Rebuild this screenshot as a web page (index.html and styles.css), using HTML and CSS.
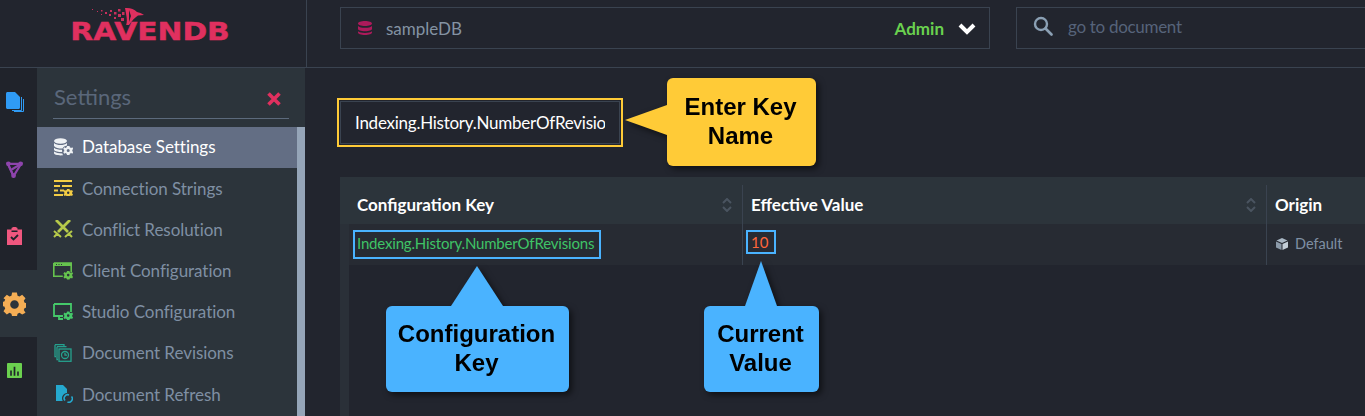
FILE: index.html
```html
<!DOCTYPE html>
<html lang="en">
<head>
<meta charset="utf-8">
<title>RavenDB Settings</title>
<link rel="stylesheet" href="styles.css">
</head>
<body>
<div class="app">
  <header class="topbar">
    <div class="brand">
      <svg class="bird" viewBox="0 0 60 18" width="60" height="18">
        <path fill="#e0305f" d="M34 1c5-.5 9 1 12 4 2 .3 5 1.500 7 3l-6 .5c-3 2-6 5-9 9.500l-3 .5c1-3 1-6 .5-9 -.5-3-1-6-1.500-8.500z"/>
        <path fill="#22252e" d="M38 3l2 6-2 6z"/>
        <g fill="#c92f5c">
          <rect x="1" y="2" width="1" height="1"/><rect x="6" y="4" width="1" height="1"/><rect x="10" y="3" width="1.500" height="1.500"/><rect x="14" y="5" width="2" height="2"/><rect x="19" y="3" width="2" height="2"/><rect x="18" y="7" width="2" height="2"/><rect x="23" y="5" width="2.500" height="2.500"/><rect x="27" y="2" width="2.500" height="2.500"/><rect x="27" y="7" width="3" height="3"/><rect x="31" y="5" width="2.500" height="3"/><rect x="23" y="10" width="2" height="2"/><rect x="30" y="11" width="3" height="3"/><rect x="10" y="7" width="1" height="1"/>
        </g>
      </svg>
      <span class="wordmark">RAVENDB</span>
    </div>
    <div class="top-fields">
      <div class="db-select">
        <svg class="db-icon" viewBox="0 0 14 14" width="14" height="14"><path fill="#ad1a5b" d="M0 2.500C0 1 3 0 7 0s7 1 7 2.500S11 5 7 5 0 4 0 2.500zM0 5c1 1.300 4 1.800 7 1.800S13 6.300 14 5v3c0 1.200-3 2.200-7 2.200S0 9.200 0 8zM0 10.200c1 1.200 4 1.700 7 1.700s6-.5 7-1.700v1.300c0 1.500-3 2.500-7 2.500s-7-1-7-2.500z"/></svg>
        <span class="db-name">sampleDB</span>
        <span class="db-role">Admin</span>
        <svg class="chev" viewBox="0 0 18 13" width="18" height="13"><path fill="none" stroke="#fff" stroke-width="4" d="M2 3l7 7 7-7"/></svg>
      </div>
      <div class="doc-search">
        <svg viewBox="0 0 20 20" width="20" height="20"><circle cx="8" cy="8" r="6" fill="none" stroke="#8ba0b4" stroke-width="2.400"/><path stroke="#8ba0b4" stroke-width="2.600" stroke-linecap="round" d="M12.500 12.500l6 6"/></svg>
        <span>go to document</span>
      </div>
    </div>
  </header>
  <div class="body">
    <nav class="rail">
      <div class="rail-item">
        <svg viewBox="0 0 18 20" width="18" height="20"><path fill="none" stroke="#2f9bf5" d="M15.500 5v13.500H6M17.500 7v12.500H8"/><path fill="#2f9bf5" d="M0 1.500C0 .7.700 0 1.500 0H9l5 5v10.500c0 .8-.7 1.500-1.500 1.500h-11C.7 17 0 16.300 0 15.500z"/></svg>
      </div>
      <div class="rail-item">
        <svg viewBox="0 0 18 18" width="17" height="17"><g fill="none" stroke="#8e44ad" stroke-width="2.300"><path d="M2 3h14L8 16z"/><path d="M2 3l6 13"/><path d="M16 3L6 9"/></g><g fill="#8e44ad"><circle cx="2.500" cy="3" r="2.500"/><circle cx="15.500" cy="3" r="2.500"/><circle cx="8" cy="15.500" r="2.500"/></g></svg>
      </div>
      <div class="rail-item">
        <svg viewBox="0 0 15 18" width="15" height="18"><path fill="#f0577f" d="M0 2.500h4.500V1.500C4.500.5 6 0 7.500 0s3 .5 3 1.500v1H15V18H0z"/><path fill="#20232b" d="M4.500 3.500h6V5h-6z"/><path fill="none" stroke="#20232b" stroke-width="1.800" d="M4 10l2.500 2.500L11 8"/></svg>
      </div>
      <div class="rail-item rail-active">
        <svg viewBox="0 0 24 24" width="23" height="24"><path fill="#f5ae55" fill-rule="evenodd" d="M9.500 0h5l.7 3.300 2 .9L20 2.400l3.500 3.500-1.800 2.800.9 2 3.300.7v4l-3.300.8-.9 2 1.800 2.800L20 23l-2.800-1.800-2 .9-.7 2.900h-5l-.7-2.900-2-.9L4 23 .5 19.500l1.800-2.800-.9-2-3-.7v-4l3-.7.9-2L.5 5.900 4 2.400l2.800 1.800 2-.9zM12 8a4.500 4.500 0 1 0 0 9 4.500 4.500 0 0 0 0-9z"/></svg>
      </div>
      <div class="rail-item">
        <svg viewBox="0 0 14 14" width="15" height="15"><path fill="#6bd04f" d="M1 0h12c.6 0 1 .4 1 1v12c0 .6-.4 1-1 1H1c-.6 0-1-.4-1-1V1c0-.6.4-1 1-1z"/><path fill="#20232b" d="M3 7h1.500v5H3zM6.200 3.500h1.600V12H6.200zM9.500 8H11v4H9.500z"/></svg>
      </div>
    </nav>
    <aside class="sidebar">
      <div class="side-head">
        <span class="side-title">Settings</span>
        <svg class="side-close" viewBox="0 0 14 14" width="14" height="14"><path stroke="#e0305f" stroke-width="3.600" d="M1.500 1.500l11 11M12.500 1.500l-11 11"/></svg>
      </div>
      <div class="side-scroll">
        <ul class="side-list">
          <li class="side-item is-active">
            <svg class="side-icon" viewBox="0 0 20 18" width="20" height="18"><g fill="#eef1f4"><ellipse cx="7.500" cy="3" rx="6.500" ry="2.800"/><path d="M1 5c1.500 1.500 4 2 6.500 2S12.500 6.500 14 5v2.500c-2 .3-4 1.500-4.500 3-2.500.2-7-.4-8.500-2.500zM1 9.800c1.500 1.500 5 2 8 2l.2 2.200C5 14 2 13.500 1 12zM1 13.500c1.500 1.300 5 2 8.300 2l.7 1.800c-5 .4-9-.6-9-2.300z"/><path fill-rule="evenodd" d="M14 8h2.500l.3 1.300 1.300.6 1.200-.7 1 1.700-1 .9v1.400l1 .9-1 1.700-1.200-.7-1.300.6-.3 1.300H14l-.3-1.300-1.300-.6-1.200.7-1-1.700 1-.9v-1.400l-1-.9 1-1.700 1.200.7 1.300-.6zm1.200 3a1.500 1.500 0 1 0 0 3 1.500 1.500 0 0 0 0-3z"/></g></svg>
            <span>Database Settings</span>
          </li>
          <li class="side-item">
            <svg class="side-icon" viewBox="0 0 20 16" width="20" height="16"><g fill="#f3cd45"><path d="M1 0h18v2H1zM1 5h6v2H1zM9 5h10v2H9zM1 9.500h4v2H1zM7 9.500h4v2H7zM1 14h9v2H1z"/><path fill-rule="evenodd" d="M14 9h2.500l.3 1 1.200.5 1-.5 1 1.500-.8.8v1.400l.8.800-1 1.500-1-.5-1.200.5-.3 1H14l-.3-1-1.200-.5-1 .5-1-1.500.8-.8v-1.400l-.8-.8 1-1.500 1 .5 1.200-.5zm1.200 2.500a1.200 1.200 0 1 0 0 2.400 1.200 1.200 0 0 0 0-2.400z"/></g></svg>
            <span>Connection Strings</span>
          </li>
          <li class="side-item">
            <svg class="side-icon" viewBox="0 0 20 18" width="20" height="18"><g fill="none" stroke="#b5c94a" stroke-width="2.800"><path d="M3 0l12 12M17 0L5 12"/></g><g fill="none" stroke="#b5c94a" stroke-width="2"><path d="M1 17l4-4M19 17l-4-4M1 11l7 6M19 11l-7 6"/></g></svg>
            <span>Conflict Resolution</span>
          </li>
          <li class="side-item">
            <svg class="side-icon" viewBox="0 0 20 18" width="20" height="18"><path fill="none" stroke="#66c34e" stroke-width="1.600" d="M.8 1h17.400v9M.8 1v13.200h9"/><path fill="#66c34e" d="M1 1h17v3H1z"/><path fill="#2c343b" d="M3 2h1v1H3zM5.500 2h1v1h-1zM8 2h1v1H8z"/><path fill="#66c34e" fill-rule="evenodd" d="M14 9h2.500l.3 1.200 1.200.5 1.100-.6 1 1.600-.9.900v1.400l.9.900-1 1.600-1.100-.6-1.200.5-.3 1.200H14l-.3-1.200-1.200-.5-1.100.6-1-1.600.9-.9v-1.400l-.9-.9 1-1.600 1.100.6 1.200-.5zm1.200 2.800a1.300 1.300 0 1 0 0 2.600 1.300 1.300 0 0 0 0-2.600z"/></svg>
            <span>Client Configuration</span>
          </li>
          <li class="side-item">
            <svg class="side-icon" viewBox="0 0 20 18" width="20" height="18"><path fill="none" stroke="#45c96a" stroke-width="1.800" d="M1 1h17v8M1 1v12h9M6 13v3h4"/><path fill="#45c96a" fill-rule="evenodd" d="M14 8.500h2.500l.3 1.200 1.200.5 1.100-.6 1 1.600-.9.900v1.400l.9.900-1 1.600-1.100-.6-1.200.5-.3 1.200H14l-.3-1.200-1.200-.5-1.100.6-1-1.600.9-.9v-1.400l-.9-.9 1-1.600 1.100.6 1.200-.5zm1.200 2.800a1.300 1.300 0 1 0 0 2.600 1.300 1.300 0 0 0 0-2.600z"/></svg>
            <span>Studio Configuration</span>
          </li>
          <li class="side-item">
            <svg class="side-icon" viewBox="0 0 20 18" width="20" height="18"><g fill="none" stroke="#25a18e" stroke-width="1.300"><path d="M2 0.700h9v2M2 .7v12h1"/><path d="M4 2.700h9.500M4 2.700v13h1"/><rect x="6" y="5" width="12" height="12.300"/><circle cx="12" cy="11" r="3.500"/><path d="M12 9v2.200h2"/></g></svg>
            <span>Document Revisions</span>
          </li>
          <li class="side-item">
            <svg class="side-icon" viewBox="0 0 20 18" width="20" height="18"><path fill="#25a9cf" d="M3 0h7l4 4v4c-3 .3-5 2.500-5 5 0 1 .2 2 .7 3H3z"/><path fill="none" stroke="#25a9cf" stroke-width="1.600" d="M12 15.500a3.500 3.500 0 0 1 4-5.500M18.500 11.500a3.500 3.500 0 0 1-4 5.500"/></svg>
            <span>Document Refresh</span>
          </li>
        </ul>
        <div class="side-bar"></div>
      </div>
    </aside>
    <main class="main">
      <div class="filter-wrap">
        <input class="filter" type="text" value="Indexing.History.NumberOfRevisions" readonly>
      </div>
      <section class="table">
        <div class="row thead">
          <div class="cell">
            <span>Configuration Key</span>
            <svg class="sort" viewBox="0 0 10 14" width="10" height="14"><path fill="none" stroke="#4a5460" stroke-width="2" d="M1 5l4-4 4 4M1 9l4 4 4-4"/></svg>
          </div>
          <div class="cell">
            <span>Effective Value</span>
            <svg class="sort" viewBox="0 0 10 14" width="10" height="14"><path fill="none" stroke="#4a5460" stroke-width="2" d="M1 5l4-4 4 4M1 9l4 4 4-4"/></svg>
          </div>
          <div class="cell"><span>Origin</span></div>
        </div>
        <div class="tbody">
          <div class="row trow">
            <div class="cell"><span class="key mark">Indexing.History.NumberOfRevisions</span></div>
            <div class="cell"><span class="val mark">10</span></div>
            <div class="cell origin">
              <svg viewBox="0 0 12 12" width="12" height="12"><path fill="#a9b7c4" d="M6 0l5.500 2.500L6 5 .5 2.500z"/><path fill="#8b9aa9" d="M0 3.500l5.500 2.500v6L0 9.500z"/><path fill="#c3ced8" d="M12 3.500L6.500 6v6L12 9.500z"/></svg>
              <span>Default</span>
            </div>
          </div>
        </div>
      </section>
    </main>
  </div>
  <div class="callout c-yellow">Enter Key<br>Name</div>
  <div class="callout c-blue c-key">Configuration<br>Key</div>
  <div class="callout c-blue c-val">Current<br>Value</div>
</div>
</body>
</html>
```
FILE: styles.css
```css
* { box-sizing: border-box; }
html, body { margin: 0; height: 100%; }
body { background: #22252e; font-family: Lato, "Noto Sans", sans-serif; overflow: hidden; }
.app { position: relative; width: 1365px; height: 416px; overflow: hidden; display: flex; flex-direction: column; }

.topbar { height: 68px; flex: none; display: flex; border-bottom: 1px solid #3a4350; }
.brand { width: 307px; flex: none; border-right: 1px solid #3a4350; position: relative; display: flex; justify-content: center; padding: 23px 0 0 0; }
.wordmark { font: 700 25px/18px "DejaVu Sans", sans-serif; color: #e0305f; transform: translateX(-3px) scaleX(1.19); height: 18px; -webkit-text-stroke: .4px #e0305f; }
.bird { position: absolute; left: 91px; top: 7px; }
.top-fields { flex: 1; display: flex; gap: 26px; padding: 7px 0 0 33px; }
.db-select { width: 650px; height: 42px; border: 1px solid #3a4350; display: flex; align-items: center; padding: 0 13px 0 17px; font-size: 17px; }
.db-name { margin-left: 14px; color: #8493a3; flex: 1; }
.db-role { color: #6ad14f; font-weight: 700; margin-right: 14px; }
.doc-search { flex: 1; height: 42px; border: 1px solid #3a4350; border-right: 0; display: flex; align-items: center; padding: 0 0 4px 16px; font-size: 17px; letter-spacing: -.3px; color: #56637a; gap: 15px; }

.body { flex: 1; display: flex; min-height: 0; }
.rail { width: 37px; flex: none; background: #20232b; display: grid; grid-auto-rows: 67.1px; padding-top: .7px; align-content: start; }
.rail-item { display: flex; align-items: center; justify-content: center; padding-right: 8px; }
.rail-active { background: #2c343b; }

.sidebar { width: 269px; flex: none; background: #2c343b; display: flex; flex-direction: column; border-right: 1px solid #22252e; }
.side-head { height: 51px; flex: none; margin: 0 16px 8px 16px; border-bottom: 1px solid #5c6a7c; display: flex; justify-content: space-between; align-items: center; padding: 6px 8px 0 1px; }
.side-title { font-size: 22px; color: #5a677a; }
.side-close { margin-top: 6px; }
.side-scroll { flex: 1; display: flex; min-height: 0; }
.side-list { list-style: none; margin: 0; padding: 0; flex: 1; }
.side-item { height: 41.2px; display: flex; align-items: center; padding: 0 0 1.200px 16px; gap: 9px; font-size: 17px; letter-spacing: -.05px; color: #7f8fa3; white-space: nowrap; }
.side-icon { flex: none; }
.is-active { background: #636e84; color: #fff; padding-bottom: 2px; }
.side-bar { width: 8px; flex: none; background: #95a5b8; }

.main { flex: 1; min-width: 0; padding: 30px 0 0 31px; display: flex; flex-direction: column; }
.filter-wrap { width: 286px; height: 49px; flex: none; border: 2px solid #ffcb37; padding: 1px; }
.filter { width: 100%; height: 100%; display: block; background: #22252e; border: 1px solid #3a4350; color: #fff; font: 17px Lato, sans-serif; letter-spacing: -.25px; padding: 0 14px; outline: 0; }
.table { flex: 1; margin: 30px 0 0 3px; background: #2a3038; display: flex; flex-direction: column; min-height: 0; }
.row { display: grid; grid-template-columns: 403px 524px 1fr; }
.thead { height: 47px; flex: none; padding-top: 8px; color: #fff; font-weight: 700; font-size: 17px; background: #2c343b; }
.thead .cell { padding: 0 10px 0 17px; justify-content: space-between; }
.thead .cell + .cell { padding-left: 8px; }
.cell { display: flex; align-items: center; border-right: 1px solid #3a4350; }
.cell:last-child { border-right: 0; }
.tbody { flex: 1; margin-left: 9px; background: #22252e; }
.trow { height: 41px; background: #272b33; grid-template-columns: 394px 524px 1fr; font-size: 15px; }
.trow .cell { padding: 6px 0 0 4px; align-items: flex-start; }
.trow .cell + .cell { padding-left: 3px; }
.mark { outline: 2px solid #4ab3ff; outline-offset: -2px; display: block; line-height: 18px; }
.key { color: #3fc466; padding: 4px 7px 7px 4px; letter-spacing: -.18px; }
.val { color: #ff653a; padding: 3px 8px 3px 5px; }
.trow .cell.origin { padding: 0 0 2px 9px; align-items: center; color: #7f8fa3; font-size: 14.500px; gap: 7px; }

.callout { position: absolute; color: #000; font: 700 24px/29px "Liberation Sans", Arial, sans-serif; text-align: center; border-radius: 6px; display: flex; align-items: center; justify-content: center; padding: 0 2px 2px 0; filter: drop-shadow(3px 3px 3px rgba(0,0,0,.55)); }
.callout::before { content: ""; position: absolute; width: 0; height: 0; border-style: solid; border-color: transparent; }
.c-yellow { left: 667px; top: 78px; width: 149px; height: 88px; background: #ffcb37; }
.c-yellow::before { left: -42px; top: 27px; border-width: 15px 42px 15px 0; border-right-color: #ffcb37; }
.c-blue { background: #4ab3ff; top: 306px; height: 86px; }
.c-key { left: 386px; width: 183px; }
.c-key::before { left: 65px; top: -40px; border-width: 0 26px 40px 26px; border-bottom-color: #4ab3ff; }
.c-val { left: 704px; width: 115px; }
.c-val::before { left: 41px; top: -45px; border-width: 0 16.500px 45px 16.500px; border-bottom-color: #4ab3ff; }
```
